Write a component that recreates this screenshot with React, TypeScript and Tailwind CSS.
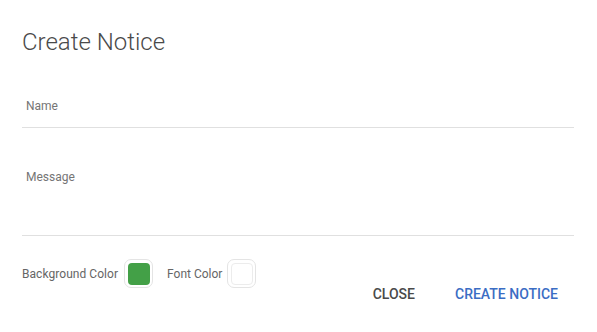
import React from 'react';

// Colour swatch with soft outer ring
const Swatch: React.FC<{ fill: string }> = ({ fill }) => (
  <div className="w-[29px] h-[29px] rounded-[7px] border border-[#e4e4e4] p-[2.5px] bg-white">
    <div className={`w-full h-full rounded-[4px] ${fill}`} />
  </div>
);

const Field: React.FC<{ label: string; className?: string }> = ({ label, className }) => (
  <div className={`border-b border-[#e0e0e0] ${className ?? ''}`}>
    <div className="pl-[4px] text-[12px] leading-[16px] text-[#757575]">{label}</div>
  </div>
);

export default function App() {
  return (
    <div className="w-[597px] h-[332px] bg-white px-[22px] pr-[23px] pt-[26px] font-['Roboto',sans-serif]">
      <h2 className="text-[24px] leading-[32px] font-light text-[#4a4a4a]">Create Notice</h2>

      <Field label="Name" className="mt-[40px] pb-[13px]" />
      <Field label="Message" className="mt-[41px] pb-[50px]" />

      <div className="flex items-start justify-between mt-[23px]">
        <div className="flex items-center text-[12px] leading-[16px] text-[#666]">
          <span className="tracking-[0.05px]">Background Color</span>
          <div className="ml-[6px]">
            <Swatch fill="bg-[#43a047]" />
          </div>
          <span className="ml-[14px]">Font Color</span>
          <div className="ml-[5px]">
            <Swatch fill="bg-white border border-[#ececec]" />
          </div>
        </div>

        <div className="flex gap-2 mt-[17px]">
          <button className="h-9 px-4 text-[14px] font-medium uppercase text-[#4a4a4a]">Close</button>
          <button className="h-9 px-4 text-[14px] font-medium uppercase text-[#3b6dc4]">Create Notice</button>
        </div>
      </div>
    </div>
  );
}
